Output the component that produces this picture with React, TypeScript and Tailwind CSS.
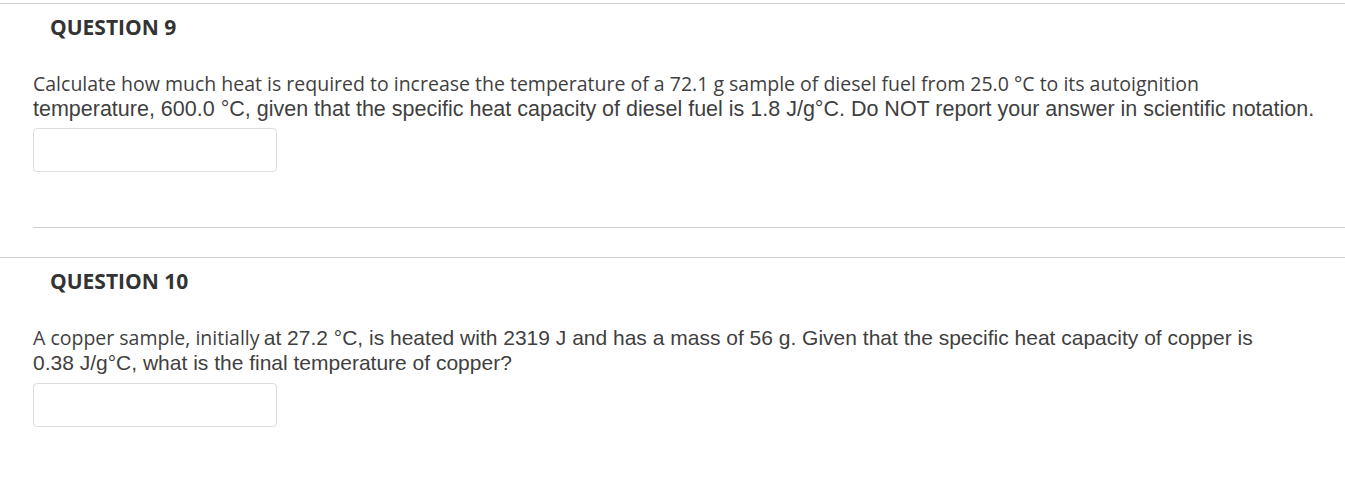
const openSans = "font-['Open_Sans',sans-serif]"
const arial = "font-['Liberation_Sans',Arial,sans-serif]"

function AnswerBox({ gap }: { gap: string }) {
  return (
    <input
      type="text"
      className={`${gap} block h-[44px] w-[244px] rounded-[4px] border border-[#dddddd] bg-white px-2 outline-none`}
    />
  )
}

function Question({
  number,
  gap,
  children,
}: {
  number: number
  gap: string
  children: React.ReactNode
}) {
  return (
    <section className="border-t border-[#d0d0d0]">
      <h2 className={`flex h-[48px] items-center pl-[50px] text-[21px] font-bold text-[#333333] ${openSans}`}>
        QUESTION {number}
      </h2>
      <div className="pl-[33px] pt-[20px]">
        <div className="whitespace-nowrap leading-[24px] text-[#3f3f3f]">{children}</div>
        <AnswerBox gap={gap} />
      </div>
    </section>
  )
}

export default function App() {
  return (
    <div className="min-h-[480px] bg-white pt-[3px]">
      <Question number={9} gap="mt-[6px]">
        <span className={`text-[19.5px] ${openSans}`}>
          Calculate how much heat is required to increase the temperature of a 72.1 g sample of diesel fuel from 25.0 °C to its autoignition
        </span>
        <br />
        <span className={`text-[21.5px] ${arial}`}>
          temperature, 600.0 °C, given that the specific heat capacity of diesel fuel is 1.8 J/g°C. Do NOT report your answer in scientific notation.
        </span>
      </Question>
      <div className="ml-[33px] mt-[55px] border-t border-[#d0d0d0]" />
      <div className="h-[29px]" />
      <Question number={10} gap="mt-[7px]">
        <span className={`text-[19.5px] ${openSans}`}>A copper sample, initially</span>{" "}
        <span className={`text-[21px] ${arial}`}>
          at 27.2 °C, is heated with 2319 J and has a mass of 56 g. Given that the specific heat capacity of copper is
        </span>
        <br />
        <span className={`text-[21px] ${arial}`}>0.38 J/g°C, what is the final temperature of copper?</span>
      </Question>
    </div>
  )
}
